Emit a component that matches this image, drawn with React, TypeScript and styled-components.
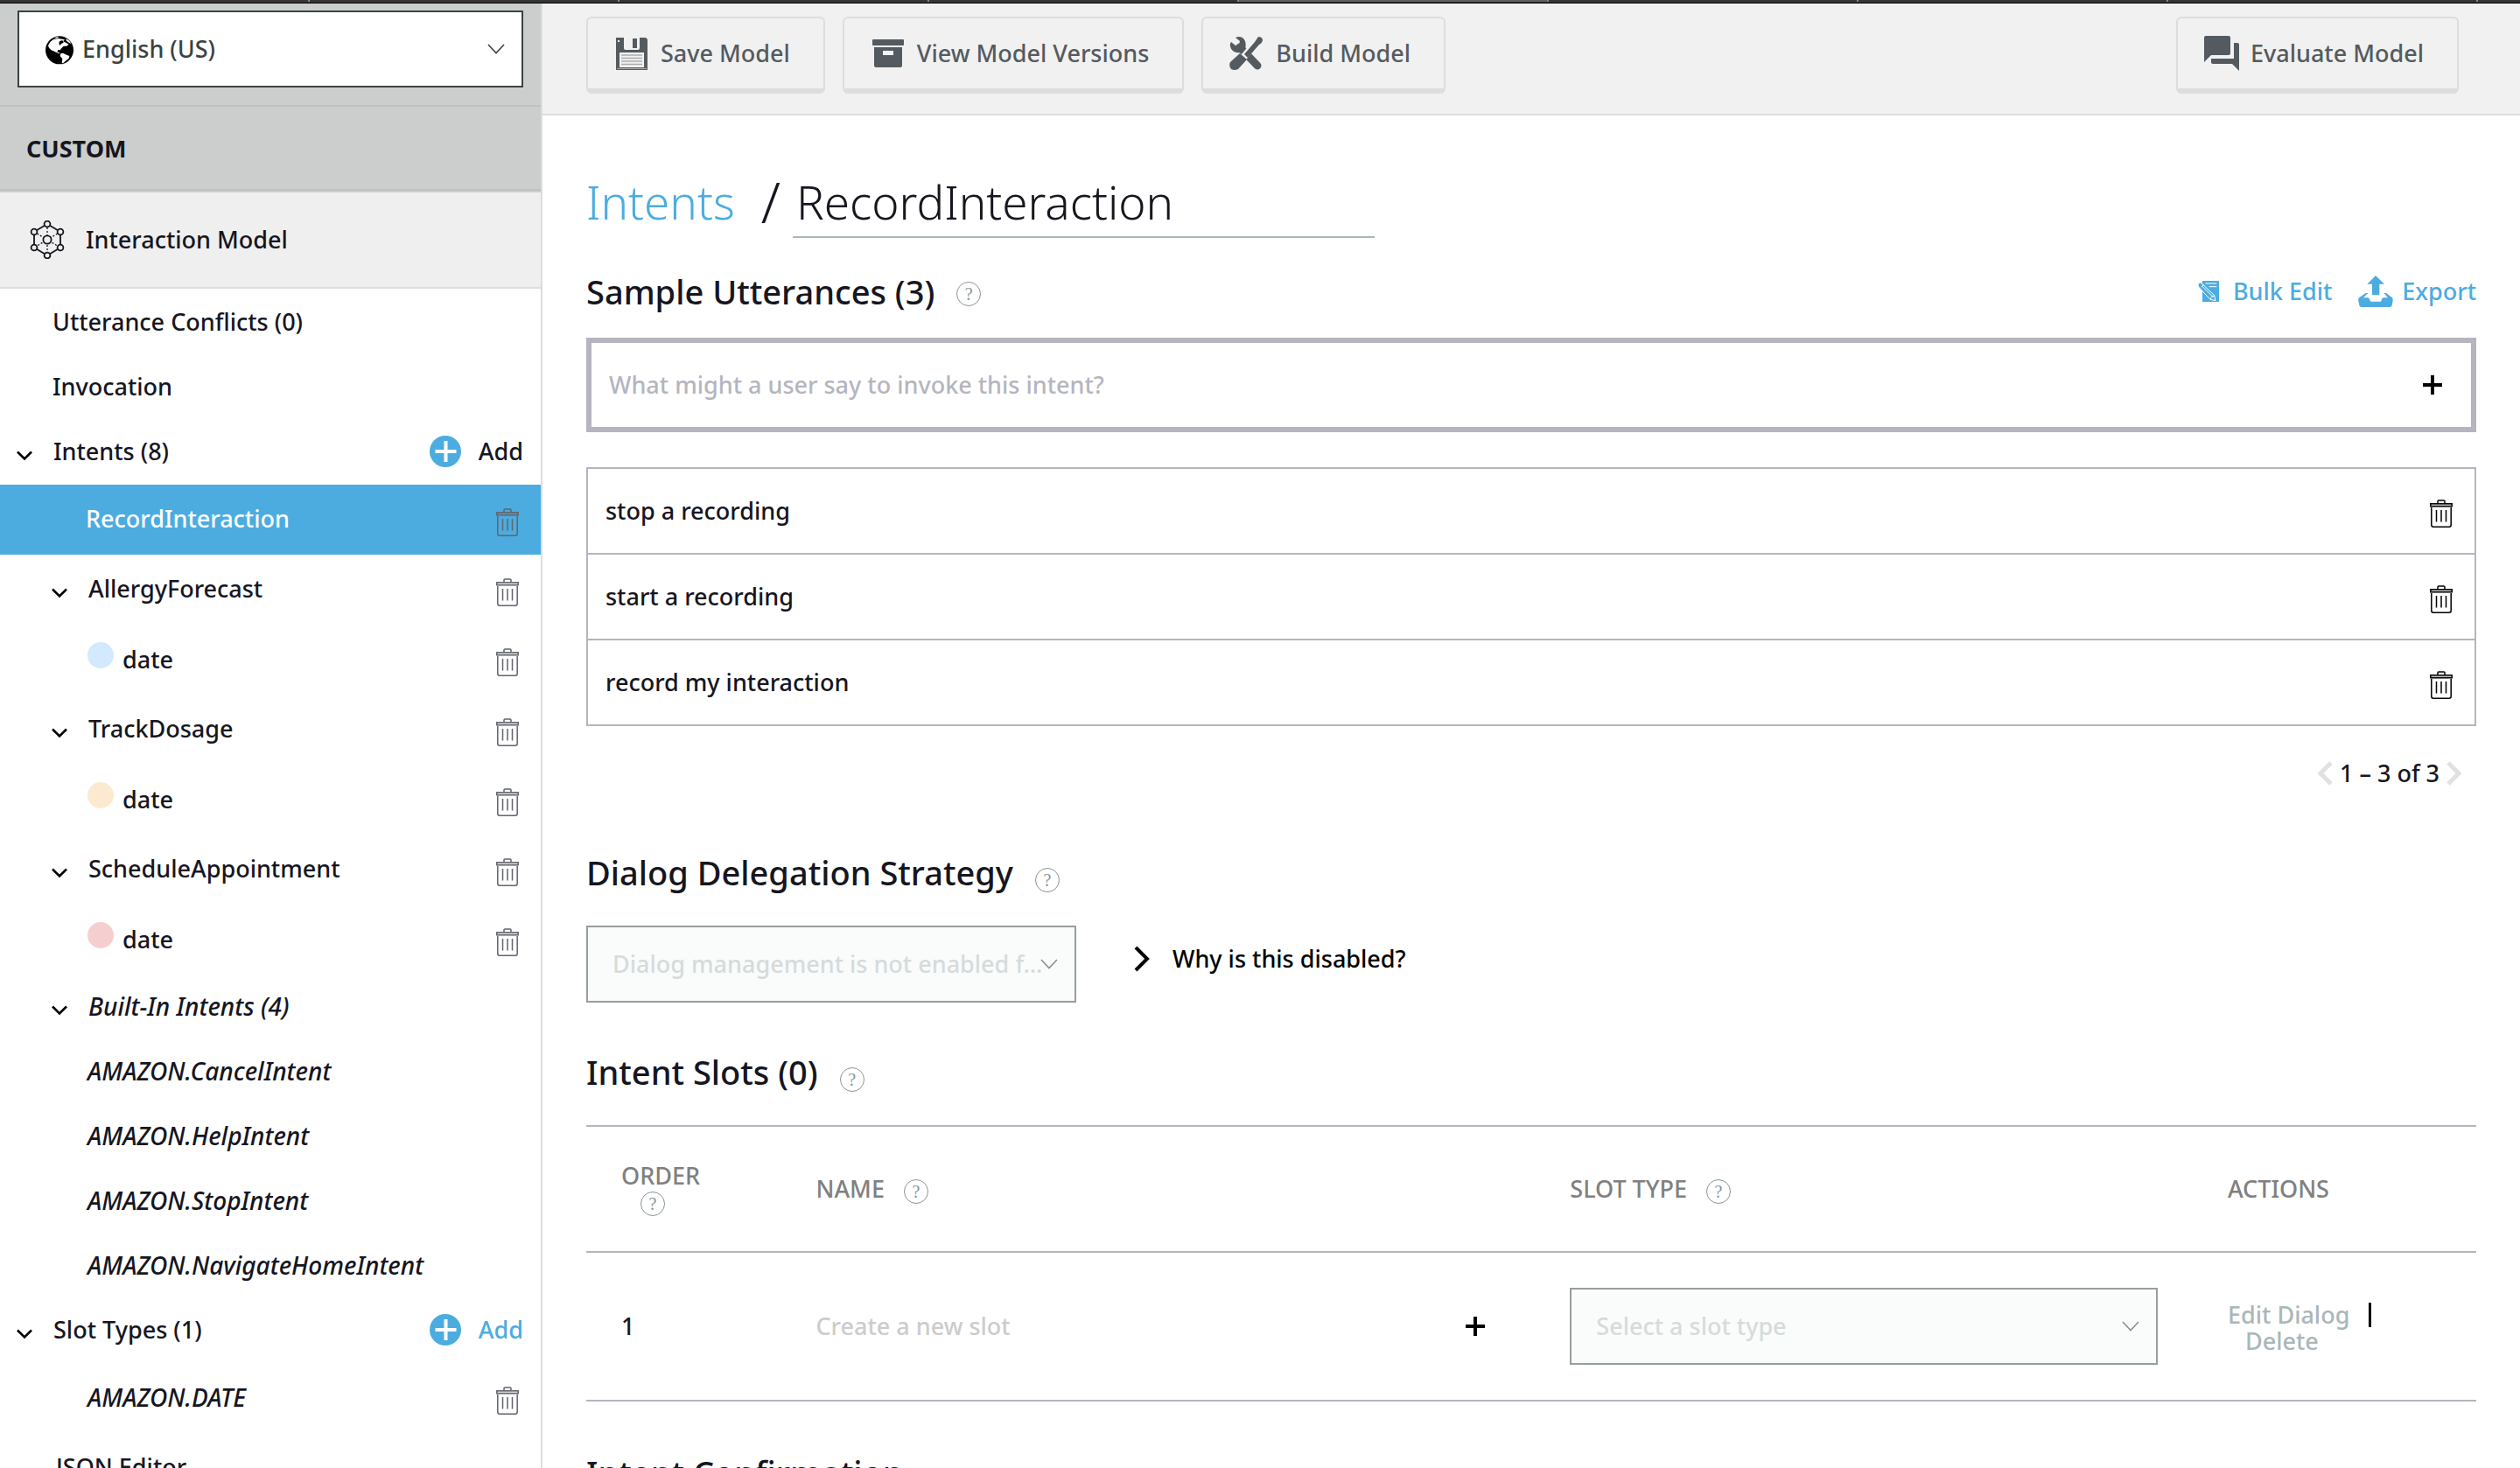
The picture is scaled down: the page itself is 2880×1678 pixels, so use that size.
import React from "react";
import styled, { createGlobalStyle, css } from "styled-components";

const color = {
  ink: "#16161f",
  blue: "#4cace0",
  grey: "#545b60",
  line: "#dddddd",
  rule: "#b5b5bf",
  muted: "#aab7b8",
};

const GlobalStyle = createGlobalStyle`
  * { box-sizing: border-box; }
  body {
    margin: 0;
    background: #fff;
    color: ${color.ink};
    font-family: "Noto Sans", "Open Sans", sans-serif;
    font-size: 27px;
    font-weight: 500;
    line-height: 36px;
  }
  button, input, select { font: inherit; color: inherit; }
  button { background: none; border: 0; padding: 0; cursor: pointer; }
  a { color: ${color.blue}; text-decoration: none; }
  svg { display: block; flex: none; }
`;

/* ---------- shell ---------- */

const Shell = styled.div`
  display: flex;
  flex-direction: column;
  height: 100vh;
  overflow: hidden;
`;

const TabStrip = styled.div`
  display: flex;
  flex: none;
  height: 4px;
  background: #363436;
  border-bottom: 1px solid #000;
`;

const StripTab = styled.div<{ $active?: boolean; $last?: boolean }>`
  flex: ${(p) => (p.$last ? "48 1 0" : "354 1 0")};
  height: 2px;
  background: ${(p) => (p.$active ? "#606062" : "transparent")};
  border-right: ${(p) => (p.$last ? "0" : "2px solid #858587")};
`;

const Columns = styled.div`
  display: flex;
  flex: 1;
  min-height: 0;
`;

/* ---------- sidebar ---------- */

const Sidebar = styled.aside`
  flex: none;
  width: 620px;
  overflow: hidden;
  border-right: 2px solid ${color.line};
`;

const LocaleBar = styled.div`
  padding: 8px 20px 20px;
  background: #cccecd;
  border-bottom: 2px solid #c0c2c1;
`;

const SelectWrap = styled.div<{ $width?: string }>`
  position: relative;
  width: ${(p) => p.$width || "100%"};
`;

const SelectIcon = styled.span<{ $side: "left" | "right"; $inset: number }>`
  position: absolute;
  top: 0;
  bottom: 0;
  ${(p) => (p.$side === "left" ? css`left: ${p.$inset}px;` : css`right: ${p.$inset}px;`)}
  display: flex;
  align-items: center;
  pointer-events: none;
`;

const SelectBox = styled.select<{ $indent: number }>`
  display: block;
  appearance: none;
  width: 100%;
  height: 88px;
  padding: 0 32px 0 ${(p) => p.$indent}px;
  background: #fff;
  border: 2px solid #3a4344;
  border-radius: 0;
  color: #3a4344;
  &:disabled {
    background: #fafbfb;
    border-color: #989d9d;
    color: #d5dbdb;
    opacity: 1;
  }
`;

const SkillType = styled.div`
  height: 98px;
  padding: 30px;
  background: #cccecd;
  font-weight: 700;
  box-shadow: inset 0 -2px #cccecd, inset 0 -4px #c0c2c1;
`;

const ModelHeader = styled.div`
  display: flex;
  align-items: center;
  gap: 24px;
  height: 110px;
  padding-left: 34px;
  background: #efefef;
  border-bottom: 2px solid ${color.line};
`;

const NavList = styled.ul`
  margin: 0;
  padding: 2px 0 0;
  list-style: none;
`;

const NavRow = styled.li<{ $tall?: boolean; $indent: number; $active?: boolean; $italic?: boolean }>`
  display: flex;
  align-items: center;
  height: ${(p) => (p.$tall ? 80 : 74)}px;
  padding-left: ${(p) => p.$indent}px;
  ${(p) =>
    p.$italic &&
    css`
      font-size: 28px;
      font-style: italic;
    `}
  ${(p) =>
    p.$active &&
    css`
      background: ${color.blue};
      --label: #fff;
    `}
`;

const NavLink = styled.a<{ $level?: boolean }>`
  padding-bottom: ${(p) => (p.$level ? 0 : 3)}px;
  color: var(--label, ${color.ink});
  white-space: nowrap;
`;

const Toggle = styled.button`
  padding: 8px 24px 0 0;
`;

const SlotDot = styled.span<{ $fill: string }>`
  width: 30px;
  height: 30px;
  margin: 0 10px 10px 0;
  border-radius: 50%;
  background: ${(p) => p.$fill};
`;

const RowTrash = styled.button`
  margin-left: auto;
  padding: 6px 25px 0 0;
`;

const AddButton = styled.button<{ $blue?: boolean }>`
  display: flex;
  align-items: center;
  gap: 20px;
  margin-left: auto;
  padding: 0 20px 2px 0;
  color: ${(p) => (p.$blue ? color.blue : color.ink)};
`;

/* ---------- toolbar ---------- */

const Main = styled.main`
  flex: 1;
  min-width: 0;
  overflow: hidden;
`;

const Toolbar = styled.div`
  display: flex;
  gap: 20px;
  padding: 15px 70px 23px 50px;
  background: #f1f1f1;
  border-bottom: 2px solid ${color.line};
`;

const ToolButton = styled.button<{ $end?: boolean }>`
  display: flex;
  align-items: center;
  gap: 13px;
  height: 88px;
  padding: 0 38px 0 30px;
  margin-left: ${(p) => (p.$end ? "auto" : "0")};
  border: 2px solid ${color.line};
  border-bottom-width: 6px;
  border-radius: 6px;
  color: ${color.grey};
  white-space: nowrap;
`;

/* ---------- page ---------- */

const Page = styled.div`
  padding: 62px 50px 0;
`;

const TitleRow = styled.div`
  display: flex;
  align-items: flex-start;
  font-size: 53px;
  font-weight: 300;
  line-height: 74px;
`;

const Slash = styled.span`
  margin: 0 14px 0 30px;
  font-size: 64px;
`;

const TitleInput = styled.input`
  width: 665px;
  height: 78px;
  padding: 0 4px 4px;
  background: none;
  border: 0;
  border-bottom: 2px solid ${color.muted};
`;

const SectionRow = styled.div<{ $top: number; $bottom: number }>`
  display: flex;
  align-items: center;
  margin: ${(p) => p.$top}px 0 ${(p) => p.$bottom}px;
`;

const SectionTitle = styled.h2`
  margin: 0 25px 0 0;
  font-size: 38px;
  font-weight: 500;
  line-height: 52px;
`;

const HelpBadge = styled.button<{ $drop?: number }>`
  flex: none;
  width: 28px;
  height: 28px;
  margin-top: ${(p) => p.$drop || 0}px;
  border: 1px solid #879596;
  border-radius: 50%;
  color: #879596;
  font-family: "Liberation Serif", serif;
  font-size: 20px;
  font-weight: 400;
  line-height: 26px;
  text-align: center;
`;

const LinkGroup = styled.div`
  display: flex;
  gap: 30px;
  margin-left: auto;
`;

const ActionLink = styled.a<{ $gap: number }>`
  display: flex;
  align-items: center;
  gap: ${(p) => p.$gap}px;
`;

const AddUtterance = styled.div`
  display: flex;
  align-items: center;
  height: 108px;
  padding: 0 33px 0 20px;
  border: 6px solid ${color.rule};
`;

const PlainInput = styled.input<{ $hint: string }>`
  flex: 1;
  min-width: 0;
  padding: 0;
  background: none;
  border: 0;
  &::placeholder {
    color: ${(p) => p.$hint};
    opacity: 1;
  }
`;

const UtteranceList = styled.ul`
  margin: 40px 0 0;
  padding: 0;
  list-style: none;
  border: 2px solid ${color.rule};
`;

const Utterance = styled.li`
  display: flex;
  align-items: center;
  height: 96px;
  padding-left: 20px;
  & + & {
    height: 98px;
    border-top: 2px solid ${color.rule};
  }
`;

const Pager = styled.div`
  display: flex;
  justify-content: flex-end;
  align-items: center;
  gap: 8px;
  margin-top: 36px;
  padding-right: 16px;
`;

const DelegationRow = styled.div`
  display: flex;
  align-items: center;
  gap: 66px;
`;

const Disclosure = styled.button`
  display: flex;
  align-items: center;
  gap: 26px;
  padding-bottom: 12px;
  color: #000;
`;

const SlotTable = styled.table`
  width: 100%;
  table-layout: fixed;
  border-collapse: separate;
  border-spacing: 0;
`;

const Head = styled.th<{ $width: string }>`
  width: ${(p) => p.$width};
  height: 146px;
  padding: 0 40px;
  border: solid ${color.rule};
  border-width: 2px 0;
  color: #808080;
  font-weight: 500;
  line-height: 30px;
  text-align: left;
`;

const HeadLabel = styled.div<{ $stacked?: boolean }>`
  display: flex;
  flex-direction: ${(p) => (p.$stacked ? "column" : "row")};
  align-items: ${(p) => (p.$stacked ? "flex-start" : "center")};
  gap: ${(p) => (p.$stacked ? 3 : 22)}px;
  ${HelpBadge} { margin-left: ${(p) => (p.$stacked ? 22 : 0)}px; }
`;

const Cell = styled.td`
  height: 170px;
  padding: 0 40px;
  border-bottom: 2px solid ${color.rule};
`;

const NewSlot = styled.div`
  display: flex;
  align-items: center;
  padding-right: 17px;
`;

const RowActions = styled.div`
  display: flex;
  flex-direction: column;
  padding-top: 4px;
  line-height: 30px;
  white-space: nowrap;
`;

const ActionLine = styled.div<{ $inset?: number }>`
  display: flex;
  align-items: center;
  gap: 22px;
  padding-left: ${(p) => p.$inset || 0}px;
`;

const DisabledAction = styled.button`
  color: ${color.muted};
  line-height: 30px;
  &:disabled { cursor: default; }
`;

const Divider = styled.span`
  width: 3px;
  height: 28px;
  background: #000;
`;

/* ---------- icons ---------- */

const Globe = () => (
  <svg width="32" height="36" viewBox="0 -8 96 108">
    <circle cx="48" cy="50" r="48" fill="#000" />
    <path
      fill="#fff"
      d="M9 34L16 22L26 14L44 10L66 14L60 20L70 24L80 30L72 36L62 36L56 42L50 50L44 48L40 56L50 60L46 62L30 54L20 50L12 42Z"
    />
    <path fill="#fff" d="M52 62L60 60L72 66L82 70L80 78L68 88L60 95L56 94L58 80L50 70Z" />
    <path fill="#fff" d="M70 10L82 18L88 28L80 24L72 18ZM30 8L42 4L46 7L36 10Z" />
    <path fill="#000" d="M48 20L58 16L62 24L54 28L50 34L46 28Z" />
  </svg>
);

const ThinChevron = ({ stroke = "#3a4344" }: { stroke?: string }) => (
  <svg width="20" height="12" viewBox="0 0 20 12" fill="none" stroke={stroke} strokeWidth="1.6">
    <path d="M1 1l9 9.500l9-9.500" />
  </svg>
);

const Caret = () => (
  <svg width="18" height="12" viewBox="0 0 18 12" fill="none" stroke="#000" strokeWidth="2.600">
    <path d="M1 1.500l8 8l8-8" />
  </svg>
);

const spokes: [number, number][] = [
  [20, 4],
  [35, 13],
  [35, 31],
  [20, 40],
  [5, 31],
  [5, 13],
];

const ModelIcon = () => (
  <svg width="40" height="44" viewBox="0 0 40 44" fill="none" stroke={color.ink} strokeWidth="1.800">
    <path d="M20 4L35 13V31L20 40L5 31V13Z" />
    <path d="M20 4V40M5 13L35 31M35 13L5 31" strokeDasharray="2 2" strokeWidth="1.300" />
    {spokes.map(([x, y]) => (
      <circle key={`${x}-${y}`} cx={x} cy={y} r="3.400" fill="#efefef" />
    ))}
    <circle cx="20" cy="22" r="4.600" fill="#efefef" />
  </svg>
);

const Trash = ({ stroke }: { stroke: string }) => (
  <svg width="26" height="32" viewBox="0 0 26 32" fill="none" stroke={stroke} strokeWidth="1.500">
    <path d="M9 4.500V2Q9 1 10 1H16Q17 1 17 2V4.500" />
    <rect x="0.800" y="4.800" width="24.400" height="3" fill={stroke} fillOpacity="0.250" />
    <path d="M1.800 9V29Q1.800 31.200 4 31.200H22Q24.200 31.200 24.200 29V9" />
    <path d="M7.500 12V25.500M13 12V25.500M18.500 12V25.500" />
  </svg>
);

const PlusCircle = () => (
  <svg width="36" height="36" viewBox="0 0 36 36">
    <circle cx="18" cy="18" r="18" fill={color.blue} />
    <path d="M18.500 6V30M6.500 18H30.500" stroke="#fff" strokeWidth="4" />
  </svg>
);

const Plus = () => (
  <svg width="22" height="22" viewBox="0 0 22 22">
    <path d="M11 0V22M0 11H22" stroke="#000" strokeWidth="4" />
  </svg>
);

const Floppy = () => (
  <svg width="40" height="40" viewBox="0 0 40 40">
    <path d="M2 2H36L38 4V39H2Z" fill={color.grey} />
    <path d="M11 2H29V14Q29 16 27 16H13Q11 16 11 14Z" fill="#f1f1f1" />
    <rect x="21" y="3" width="5" height="11" fill={color.grey} />
    <rect x="4" y="5" width="2" height="2" fill="#f1f1f1" />
    <rect x="6" y="19" width="28" height="17" fill="#f1f1f1" />
    <path d="M8 22H32M8 25.500H32M8 29H32M8 32.500H32" stroke="#a9acae" strokeWidth="1.500" />
    <path d="M3 37.500H37" stroke="#a9acae" />
  </svg>
);

const Archive = () => (
  <svg width="40" height="40" viewBox="0 0 40 40" fill={color.grey}>
    <rect x="2" y="4" width="36" height="7" rx="1" />
    <path fillRule="evenodd" d="M4 13H36V34Q36 36 34 36H6Q4 36 4 34ZM14 17V22H26V17Z" />
  </svg>
);

const Tools = () => (
  <svg width="40" height="40" viewBox="0 0 40 40">
    <path d="M12 13L32 34" stroke={color.grey} strokeWidth="9" strokeLinecap="round" />
    <path
      d="M7 2C11 0 16 1 18 6C19 10 19 13 17 16L12 19C7 20 2 17 1 12C0.500 10 1 8 2 7L7 11L11 10L12 6Z"
      fill={color.grey}
    />
    <path d="M15 26L33 4" stroke="#f1f1f1" strokeWidth="8" />
    <path d="M33 1Q37 1 38 4Q38 8 34 10L21 25L17 21L29 7Z" fill={color.grey} />
    <path d="M12 20L20 27L10 38Q6 40 2 38Q-1 34 1 30Z" fill={color.grey} />
  </svg>
);

const Forum = () => (
  <svg width="40" height="40" viewBox="2 2 20 20" fill={color.grey}>
    <path d="M21 6h-2v9H6v2c0 .55.45 1 1 1h11l4 4V7c0-.55-.45-1-1-1zm-4 6V3c0-.55-.45-1-1-1H3c-.55 0-1 .45-1 1v14l4-4h10c.55 0 1-.45 1-1z" />
  </svg>
);

const BulkEditIcon = () => (
  <svg width="24" height="24" viewBox="0 0 72 72">
    <path d="M15 0H72V72H15Z" fill={color.blue} />
    <path d="M26 9H64M38 20H64" stroke="#fff" strokeWidth="3" />
    <path
      d="M0 14Q0 7 7 6Q11 6 14 10L56 50L60 68L42 64L2 21Z"
      fill={color.blue}
      stroke="#fff"
      strokeWidth="3"
    />
    <path d="M12 22L20 12M16 20L52 56M42 64Q42 54 56 50" stroke="#fff" strokeWidth="3" fill="none" />
  </svg>
);

const ExportIcon = () => (
  <svg width="40" height="36" viewBox="0 0 120 108" fill={color.blue}>
    <path d="M60 0L90 29H73V66H48V29H31Z" />
    <path d="M26 60H34L18 76H36L43 89H78L84 76H102L88 60H96L117 76Q120 79 119 86L116 102Q115 108 108 108H12Q5 108 4 102L1 86Q0 79 3 76Z" />
  </svg>
);

const PagerArrow = ({ flip }: { flip?: boolean }) => (
  <svg width="18" height="28" viewBox="0 0 18 28" fill="none" stroke="#e1e1e3" strokeWidth="5">
    <path d={flip ? "M2 2L14 14L2 26" : "M16 2L4 14L16 26"} />
  </svg>
);

const BoldRight = () => (
  <svg width="18" height="30" viewBox="0 0 18 30" fill="none" stroke="#000" strokeWidth="4">
    <path d="M2 2L15 15L2 28" />
  </svg>
);

/* ---------- composed parts ---------- */

const Help = ({ about, drop }: { about: string; drop?: number }) => (
  <HelpBadge type="button" aria-label={`Help: ${about}`} $drop={drop}>
    ?
  </HelpBadge>
);

const TrashAction = ({ name, dark }: { name: string; dark?: boolean }) => (
  <RowTrash type="button" aria-label={`Delete ${name}`}>
    <Trash stroke={dark ? "#000" : "#62646d"} />
  </RowTrash>
);

const Expander = ({ name }: { name: string }) => (
  <Toggle type="button" aria-label={`Collapse ${name}`}>
    <Caret />
  </Toggle>
);

const customIntents = [
  { name: "AllergyForecast", fill: "#d3e9fd" },
  { name: "TrackDosage", fill: "#fcead0" },
  { name: "ScheduleAppointment", fill: "#f5cfcf" },
];

const builtIns = [
  "AMAZON.CancelIntent",
  "AMAZON.HelpIntent",
  "AMAZON.StopIntent",
  "AMAZON.NavigateHomeIntent",
];

const utterances = ["stop a recording", "start a recording", "record my interaction"];

function SideNav() {
  return (
    <Sidebar>
      <LocaleBar>
        <SelectWrap>
          <SelectIcon $side="left" $inset={32}>
            <Globe />
          </SelectIcon>
          <SelectBox aria-label="Language" $indent={72}>
            <option>English (US)</option>
          </SelectBox>
          <SelectIcon $side="right" $inset={21}>
            <ThinChevron />
          </SelectIcon>
        </SelectWrap>
      </LocaleBar>
      <SkillType>CUSTOM</SkillType>
      <ModelHeader>
        <ModelIcon />
        Interaction Model
      </ModelHeader>
      <NavList>
        <NavRow $indent={60}>
          <NavLink href="#conflicts">Utterance Conflicts (0)</NavLink>
        </NavRow>
        <NavRow $indent={60}>
          <NavLink href="#invocation">Invocation</NavLink>
        </NavRow>
        <NavRow $indent={19}>
          <Expander name="Intents" />
          <NavLink href="#intents">Intents (8)</NavLink>
          <AddButton type="button">
            <PlusCircle />
            Add
          </AddButton>
        </NavRow>
        <NavRow $tall $active $indent={98}>
          <NavLink href="#record">RecordInteraction</NavLink>
          <TrashAction name="RecordInteraction" />
        </NavRow>
        {customIntents.map((intent) => (
          <React.Fragment key={intent.name}>
            <NavRow $tall $indent={59}>
              <Expander name={intent.name} />
              <NavLink href={`#${intent.name}`}>{intent.name}</NavLink>
              <TrashAction name={intent.name} />
            </NavRow>
            <NavRow $tall $indent={100}>
              <SlotDot $fill={intent.fill} />
              <NavLink $level href={`#${intent.name}-date`}>
                date
              </NavLink>
              <TrashAction name="date" />
            </NavRow>
          </React.Fragment>
        ))}
        <NavRow $italic $indent={59}>
          <Expander name="Built-In Intents" />
          <NavLink href="#builtin">Built-In Intents (4)</NavLink>
        </NavRow>
        {builtIns.map((name) => (
          <NavRow key={name} $italic $indent={100}>
            <NavLink href={`#${name}`}>{name}</NavLink>
          </NavRow>
        ))}
        <NavRow $indent={19}>
          <Expander name="Slot Types" />
          <NavLink href="#slot-types">Slot Types (1)</NavLink>
          <AddButton type="button" $blue>
            <PlusCircle />
            Add
          </AddButton>
        </NavRow>
        <NavRow $tall $italic $indent={100}>
          <NavLink href="#amazon-date">AMAZON.DATE</NavLink>
          <TrashAction name="AMAZON.DATE" />
        </NavRow>
        <NavRow $tall $indent={64}>
          <NavLink href="#json">JSON Editor</NavLink>
        </NavRow>
      </NavList>
    </Sidebar>
  );
}

export default function App() {
  return (
    <Shell>
      <GlobalStyle />
      <TabStrip>
        {[0, 1, 2, 3, 4, 5, 6, 7].map((n) => (
          <StripTab key={n} $active={n === 4} />
        ))}
        <StripTab $last />
      </TabStrip>
      <Columns>
        <SideNav />
        <Main>
          <Toolbar>
            <ToolButton type="button">
              <Floppy />
              Save Model
            </ToolButton>
            <ToolButton type="button">
              <Archive />
              View Model Versions
            </ToolButton>
            <ToolButton type="button">
              <Tools />
              Build Model
            </ToolButton>
            <ToolButton type="button" $end>
              <Forum />
              Evaluate Model
            </ToolButton>
          </Toolbar>
          <Page>
            <TitleRow>
              <a href="#intents">Intents</a>
              <Slash>/</Slash>
              <TitleInput aria-label="Intent name" defaultValue="RecordInteraction" />
            </TitleRow>

            <SectionRow $top={35} $bottom={27}>
              <SectionTitle>Sample Utterances (3)</SectionTitle>
              <Help about="sample utterances" drop={6} />
              <LinkGroup>
                <ActionLink href="#bulk" $gap={16}>
                  <BulkEditIcon />
                  Bulk Edit
                </ActionLink>
                <ActionLink href="#export" $gap={10}>
                  <ExportIcon />
                  Export
                </ActionLink>
              </LinkGroup>
            </SectionRow>

            <AddUtterance>
              <PlainInput
                $hint={color.rule}
                aria-label="New utterance"
                placeholder="What might a user say to invoke this intent?"
              />
              <button type="button" aria-label="Add utterance">
                <Plus />
              </button>
            </AddUtterance>

            <UtteranceList>
              {utterances.map((text) => (
                <Utterance key={text}>
                  {text}
                  <TrashAction name={text} dark />
                </Utterance>
              ))}
            </UtteranceList>

            <Pager>
              <button type="button" aria-label="Previous page">
                <PagerArrow />
              </button>
              1 – 3 of 3
              <button type="button" aria-label="Next page">
                <PagerArrow flip />
              </button>
            </Pager>

            <SectionRow $top={69} $bottom={35}>
              <SectionTitle>Dialog Delegation Strategy</SectionTitle>
              <Help about="dialog delegation" drop={18} />
            </SectionRow>
            <DelegationRow>
              <SelectWrap $width="560px">
                <SelectBox disabled aria-label="Dialog delegation strategy" $indent={28}>
                  <option>Dialog management is not enabled f…</option>
                </SelectBox>
                <SelectIcon $side="right" $inset={21}>
                  <ThinChevron stroke="#8a9090" />
                </SelectIcon>
              </SelectWrap>
              <Disclosure type="button">
                <BoldRight />
                Why is this disabled?
              </Disclosure>
            </DelegationRow>

            <SectionRow $top={53} $bottom={35}>
              <SectionTitle>Intent Slots (0)</SectionTitle>
              <Help about="intent slots" drop={18} />
            </SectionRow>
            <SlotTable>
              <thead>
                <tr>
                  <Head $width="10.3%">
                    <HeadLabel $stacked>
                      ORDER
                      <Help about="order" />
                    </HeadLabel>
                  </Head>
                  <Head $width="39.9%">
                    <HeadLabel>
                      NAME
                      <Help about="name" drop={6} />
                    </HeadLabel>
                  </Head>
                  <Head $width="34.8%">
                    <HeadLabel>
                      SLOT TYPE
                      <Help about="slot type" drop={6} />
                    </HeadLabel>
                  </Head>
                  <Head $width="15%">ACTIONS</Head>
                </tr>
              </thead>
              <tbody>
                <tr>
                  <Cell>1</Cell>
                  <Cell>
                    <NewSlot>
                      <PlainInput $hint="#cccccc" aria-label="Slot name" placeholder="Create a new slot" />
                      <button type="button" aria-label="Add slot">
                        <Plus />
                      </button>
                    </NewSlot>
                  </Cell>
                  <Cell>
                    <SelectWrap>
                      <SelectBox disabled aria-label="Slot type" $indent={28}>
                        <option>Select a slot type</option>
                      </SelectBox>
                      <SelectIcon $side="right" $inset={21}>
                        <ThinChevron stroke="#8a9090" />
                      </SelectIcon>
                    </SelectWrap>
                  </Cell>
                  <Cell>
                    <RowActions>
                      <ActionLine>
                        <DisabledAction type="button" disabled>
                          Edit Dialog
                        </DisabledAction>
                        <Divider />
                      </ActionLine>
                      <ActionLine $inset={20}>
                        <DisabledAction type="button" disabled>
                          Delete
                        </DisabledAction>
                      </ActionLine>
                    </RowActions>
                  </Cell>
                </tr>
              </tbody>
            </SlotTable>

            <SectionRow $top={55} $bottom={35}>
              <SectionTitle>Intent Confirmation</SectionTitle>
            </SectionRow>
          </Page>
        </Main>
      </Columns>
    </Shell>
  );
}
